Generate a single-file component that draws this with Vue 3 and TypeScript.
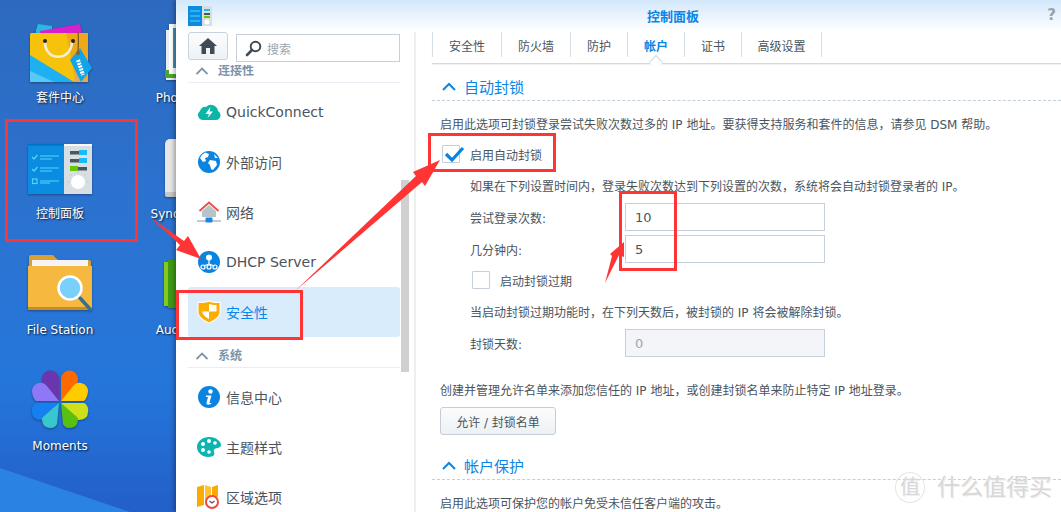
<script setup lang="ts">
const tabs = ['安全性', '防火墙', '防护', '帐户', '证书', '高级设置']
const tabWidths = [69, 69, 57, 57, 57, 81]
const activeTab = '帐户'
</script>

<template>
  <div class="screen">
    <div class="desktop">
      <div class="cell">
        <svg class="app" viewBox="0 0 64 64">
          <path d="M8 8 L10 2 L24 4 L24 14 L8 14Z" fill="#2ab8e0" />
          <path d="M12 9 L52 2 L54 14 L12 14Z" fill="#d81fd0" />
          <rect x="2" y="11" width="58" height="49" rx="1.500" fill="#f6c30a" />
          <path d="M38 11 H60 V60 H48Z" fill="#f0a818" />
          <path d="M2 33 L46 60 H3.500 Q2 60 2 58Z" fill="#1fb0f2" />
          <path d="M2 49 L26 60 H3.500 Q2 60 2 58Z" fill="#58c8f5" />
          <path d="M48 46 L60 60 H46Z" fill="#e0a860" />
          <path d="M17 19 C16 40 44 40 44 19" fill="none" stroke="#f6eed4" stroke-width="2.600" />
          <circle cx="17" cy="19" r="2" fill="#222" />
          <circle cx="45" cy="19" r="2" fill="#222" />
          <path d="M52 26 L64 46 L53 60 L42 38Z" fill="#10a5e8" />
          <path d="M50 38 L55 53" stroke="#fff" stroke-width="4" stroke-dasharray="2 1" />
          <circle cx="50" cy="31" r="2" fill="#8a6a20" />
          <path d="M50 10 C51 18 50 26 50 30" fill="none" stroke="#7a5a20" stroke-width="1.200" />
        </svg>
        <span class="app-name">套件中心</span>
      </div>
      <div class="cell">
        <svg class="app" viewBox="0 0 64 64">
          <rect x="2" y="8" width="50" height="50" fill="#e8edf0" />
          <rect x="1" y="48" width="58" height="8" fill="#4aa52e" />
          <rect x="5" y="2" width="54" height="50" fill="#fff" />
          <rect x="9" y="6" width="46" height="40" fill="#4a90b8" />
        </svg>
        <span class="app-name">Photo Station</span>
      </div>
      <div class="cell">
        <svg class="app" viewBox="0 0 64 64">
          <rect x="0" y="6" width="36" height="50" fill="#0a8ce0" />
          <rect x="0" y="6" width="36" height="1.500" fill="#0070c0" />
          <rect x="36" y="6" width="28" height="50" fill="#d8dfe3" />
          <rect x="36" y="6" width="28" height="2" fill="#f6f8f9" />
          <path d="M4 19 L6 21 L9.500 17 M4 31 L6 33 L9.500 29" fill="none" stroke="#58d2ff" stroke-width="1.200" />
          <rect x="4.500" y="41" width="4.500" height="4.500" fill="none" stroke="#58d2ff" stroke-width="1.200" />
          <path d="M12 18 H31 M12 21 H24 M12 30 H31 M12 33 H24 M12 43 H31 M12 45 H22" stroke="#58d2ff" stroke-width="1" />
          <rect x="42" y="13" width="17" height="3.500" fill="#4a5660" />
          <rect x="51" y="12" width="8" height="5" fill="#18bdf5" />
          <rect x="42" y="21" width="17" height="3.500" fill="#4a5660" />
          <rect x="51" y="20" width="8" height="5" fill="#18bdf5" />
          <rect x="42" y="29" width="17" height="3.500" fill="#4a5660" />
          <rect x="42" y="28" width="8" height="5" fill="#66c800" />
          <circle cx="50" cy="44" r="7" fill="#fff" />
          <path d="M50 35 V33.500 M41 44 H39.500 M60.500 44 H59 M43.500 37.500 L42.500 36.500 M56.500 37.500 L57.500 36.500" stroke="#aeb8be" stroke-width="0.800" />
        </svg>
        <span class="app-name">控制面板</span>
      </div>
      <div class="cell">
        <svg class="app" viewBox="0 0 64 64">
          <rect x="1" y="1" width="62" height="58" rx="5" fill="#e6e6e6" />
          <rect x="1" y="54" width="62" height="5" rx="2" fill="#c8c8c8" />
        </svg>
        <span class="app-name">Synology Drive</span>
      </div>
      <div class="cell">
        <svg class="app" viewBox="0 0 64 64">
          <path d="M1 3 Q1 1 3 1 H25 L30 6 H61 Q63 6 63 8 V20 H1Z" fill="#d9a134" />
          <rect x="4" y="6" width="56" height="8" fill="#f4f4f4" />
          <path d="M0 12 H64 V53 Q64 56 61 56 H3 Q0 56 0 53Z" fill="#f5b93f" />
          <rect x="0" y="53" width="60" height="3" fill="#c98b22" />
          <path d="M52 44 L62 55" stroke="#38708c" stroke-width="3.500" stroke-linecap="round" />
          <circle cx="42" cy="34" r="11.500" fill="#79d0fb" stroke="#fff" stroke-width="2.500" />
        </svg>
        <span class="app-name">File Station</span>
      </div>
      <div class="cell">
        <svg class="app" viewBox="0 0 64 64">
          <rect x="28" y="8" width="36" height="44" fill="#1c6e10" />
          <rect x="0" y="8" width="6" height="44" fill="#84c820" />
          <rect x="4" y="6" width="34" height="48" fill="#3f9a14" />
        </svg>
        <span class="app-name">Audio Station</span>
      </div>
      <div class="cell">
        <svg class="app" viewBox="0 0 64 64">
          <path d="M31 31 L31 9 A8.500 8.500 0 0 0 14 9 Q14 16 19 20Z" fill="#6b35ad" />
          <path d="M31 31 L8 31 Q4 27 4 20 A8.500 8.500 0 0 1 18 15Z" fill="#8f78f8" />
          <path d="M33 31 L33 9 A8.500 8.500 0 0 1 50 9 Q50 16 45 20Z" fill="#ff6a00" />
          <path d="M33 31 L56 31 Q60 27 60 20 A8.500 8.500 0 0 0 46 15Z" fill="#ffcc00" />
          <path d="M31 33 L8 33 A8.500 8.500 0 0 0 4 42 Q4 50 14 50 Q18 50 20 46Z" fill="#1680f0" />
          <path d="M31 33 L14 48 Q14 55 18 57 Q26 60 29 54Z" fill="#38c8cc" />
          <path d="M33 33 L56 33 A8.500 8.500 0 0 1 60 42 Q60 50 50 50 Q46 50 44 46Z" fill="#d0e018" />
          <path d="M33 33 L50 48 Q50 55 46 57 Q38 60 35 54Z" fill="#58c010" />
        </svg>
        <span class="app-name">Moments</span>
      </div>
    </div>

    <div class="window">
      <header class="titlebar">
        <svg class="title-icon" viewBox="0 0 24 22">
          <rect x="0" y="1" width="14" height="20" fill="#0a8ce0" />
          <path d="M2 6 H12 M2 11 H12 M2 16 H12" stroke="#58d2ff" stroke-width="1" />
          <rect x="14" y="1" width="10" height="20" fill="#d8dfe3" />
          <rect x="16" y="4" width="6" height="2" fill="#18bdf5" />
          <rect x="16" y="8" width="6" height="2" fill="#4a5660" />
          <rect x="16" y="11" width="6" height="2" fill="#66c800" />
          <circle cx="19" cy="17" r="2.500" fill="#fff" />
        </svg>
        <span class="title">控制面板</span>
        <span class="help">?</span>
      </header>

      <div class="body">
        <aside class="sidebar">
          <div class="tools">
            <button class="home">
              <svg width="18" height="18" viewBox="0 0 18 18">
                <path d="M9 1 L18 9 H15.500 V17 H11 V11 H7 V17 H2.500 V9 H0Z" fill="#414b55" />
              </svg>
            </button>
            <div class="search">
              <svg width="17" height="17" viewBox="0 0 17 17">
                <circle cx="10.500" cy="6.500" r="4.800" fill="none" stroke="#414b55" stroke-width="2" />
                <path d="M7 10 L2 15" stroke="#414b55" stroke-width="2.600" stroke-linecap="round" />
              </svg>
              <span>搜索</span>
            </div>
          </div>

          <div class="nav-view">
            <div class="nav-list">
              <div class="nav-group">
                <svg class="group-arrow" width="12" height="8" viewBox="0 0 12 8"><path d="M0.500 7 L6 1.500 L11.500 7" fill="none" stroke="#7c93a8" stroke-width="1.800" /></svg>
                连接性
              </div>
              <div class="nav-item">
                <svg class="nav-icon" viewBox="0 0 24 24">
                  <path d="M6 20 A5 5 0 0 1 3 11 A5 5 0 0 1 9 7 A7 7 0 0 1 21 11 A4.800 4.800 0 0 1 19 20Z" fill="#0db5a8" />
                  <path d="M13.500 7 L8.500 14 H12 L10.500 18 L16 11.500 H12.500Z" fill="#fff" />
                </svg>
                QuickConnect
              </div>
              <div class="nav-item">
                <svg class="nav-icon" viewBox="0 0 24 24">
                  <circle cx="12" cy="12" r="11" fill="#0a84e0" />
                  <path d="M8 2.500 L12 4 L11 7 L8 8 L9 11 L6 12 L3 8 Q5 4 8 2.500Z M13 10 L19 11 L20 15 L16 20 L14 19 L13 15 L11 13Z M17 4 L21 8 L18 8Z" fill="#fff" />
                </svg>
                外部访问
              </div>
              <div class="nav-item">
                <svg class="nav-icon" viewBox="0 0 24 24">
                  <path d="M5 11 V17 H19 V11 L12 5Z" fill="#b8c4cc" />
                  <path d="M2.500 11 L12 2.500 L21.500 11" fill="none" stroke="#ee4b45" stroke-width="1.800" />
                  <path d="M0 21 H24" stroke="#9aa8b2" stroke-width="1.200" />
                  <rect x="8.500" y="17.500" width="7" height="5" rx="1" fill="#1c86e8" />
                </svg>
                网络
              </div>
              <div class="nav-item">
                <svg class="nav-icon" viewBox="0 0 24 24">
                  <circle cx="12" cy="12" r="11" fill="#0a84e0" />
                  <circle cx="12" cy="7.500" r="3" fill="#fff" />
                  <path d="M12 10 V14 M12 14 L6.500 16 M12 14 L17.500 16" stroke="#fff" stroke-width="1.200" />
                  <g fill="none" stroke="#fff" stroke-width="1.200">
                    <circle cx="6" cy="17" r="2" />
                    <circle cx="12" cy="17" r="2" />
                    <circle cx="18" cy="17" r="2" />
                  </g>
                </svg>
                DHCP Server
              </div>
              <div class="nav-item active">
                <svg class="nav-icon" viewBox="0 0 24 24">
                  <path d="M12 0.500 Q18 2.500 23.500 1.500 V13 Q22 19 12 23.500 Q2 19 0.500 13 V1.500 Q6 2.500 12 0.500Z" fill="#fff" />
                  <path d="M12 1.800 Q18 3.500 22.500 2.800 V13 Q21 18.500 12 22.500 Q3 18.500 1.500 13 V2.800 Q6 3.500 12 1.800Z" fill="#fbad00" />
                  <path d="M12 4 Q16 5.300 19.500 5 V11.500 H12Z M12 11.500 V19 Q6.500 16.500 5 11.500Z" fill="#fff" />
                </svg>
                安全性
              </div>
              <div class="nav-group">
                <svg class="group-arrow" width="12" height="8" viewBox="0 0 12 8"><path d="M0.500 7 L6 1.500 L11.500 7" fill="none" stroke="#7c93a8" stroke-width="1.800" /></svg>
                系统
              </div>
              <div class="nav-item">
                <svg class="nav-icon" viewBox="0 0 24 24">
                  <circle cx="12" cy="12" r="11" fill="#0a84e0" />
                  <circle cx="13.500" cy="6.500" r="2.200" fill="#fff" />
                  <path d="M9 10.500 H14.500 L12.500 17.500 Q12.300 18.500 14.500 17.500 L14 19 Q9 21 9.500 17.500 L11 12 H9Z" fill="#fff" />
                </svg>
                信息中心
              </div>
              <div class="nav-item">
                <svg class="nav-icon" viewBox="0 0 24 24">
                  <path d="M12 2 C20 2 24 7 24 10 C24 14 18 12 17 15 C16 17 19 19 16 21 C8 24 0 19 0 12 C0 6 6 2 12 2Z" fill="#0db5b0" />
                  <g fill="#fff">
                    <circle cx="6" cy="9" r="2" />
                    <circle cx="12" cy="6" r="2" />
                    <circle cx="18" cy="8" r="1.800" />
                    <circle cx="6" cy="15" r="2" />
                    <circle cx="12" cy="17" r="1.800" />
                  </g>
                </svg>
                主题样式
              </div>
              <div class="nav-item">
                <svg class="nav-icon" viewBox="0 0 24 24">
                  <path d="M0 2 L7 0 L7 20 L0 22Z M15 2 L21 0 L21 12 L15 12Z" fill="#f9ab00" />
                  <path d="M8 0 L14 2 L14 14 L8 20Z" fill="#ffc233" />
                  <circle cx="15" cy="17" r="6" fill="#fff" stroke="#ee4b45" stroke-width="2" />
                  <path d="M12.500 16 L15 18 L17.500 16" fill="none" stroke="#555" stroke-width="1.200" />
                </svg>
                区域选项
              </div>
            </div>
          </div>
          <div class="scroll-thumb" />
        </aside>

        <main class="main">
          <nav class="tabs">
            <div
              v-for="(tab, i) in tabs"
              :key="tab"
              class="tab"
              :class="{ current: tab === activeTab }"
              :style="{ width: tabWidths[i] + 'px' }"
            >
              {{ tab }}
            </div>
          </nav>

          <div class="section-head">
            <svg width="14" height="9" viewBox="0 0 14 9"><path d="M1 8 L7 2 L13 8" fill="none" stroke="#0a86e6" stroke-width="2" /></svg>
            自动封锁
          </div>
          <p class="desc top">启用此选项可封锁登录尝试失败次数过多的 IP 地址。要获得支持服务和套件的信息，请参见 DSM 帮助。</p>
          <label class="check first">
            <span class="box">
              <svg class="tick" width="22" height="18" viewBox="0 0 22 18"><path d="M3 9 L9 15 L20 3" fill="none" stroke="#0a84e0" stroke-width="3.200" /></svg>
            </span>
            启用自动封锁
          </label>
          <p class="desc sub para">如果在下列设置时间内，登录失败次数达到下列设置的次数，系统将会自动封锁登录者的 IP。</p>
          <div class="field f1">
            <span class="field-label">尝试登录次数:</span>
            <div class="input">10</div>
          </div>
          <div class="field f2">
            <span class="field-label">几分钟内:</span>
            <div class="input">5</div>
          </div>
          <label class="check second">
            <span class="box" />
            启动封锁过期
          </label>
          <p class="desc sub para">当启动封锁过期功能时，在下列天数后，被封锁的 IP 将会被解除封锁。</p>
          <div class="field f1">
            <span class="field-label">封锁天数:</span>
            <div class="input disabled">0</div>
          </div>
          <p class="desc list-desc">创建并管理允许名单来添加您信任的 IP 地址，或创建封锁名单来防止特定 IP 地址登录。</p>
          <button class="list-btn">允许 / 封锁名单</button>

          <div class="section-head second-head">
            <svg width="14" height="9" viewBox="0 0 14 9"><path d="M1 8 L7 2 L13 8" fill="none" stroke="#0a86e6" stroke-width="2" /></svg>
            帐户保护
          </div>
          <p class="desc top">启用此选项可保护您的帐户免受未信任客户端的攻击。</p>
        </main>
      </div>
    </div>

    <div class="watermark">
      <span class="wm-seal">值</span>
      <span class="wm-text">什么值得买</span>
    </div>

    <svg class="marks" width="1061" height="512" viewBox="0 0 1061 512">
      <g fill="none" stroke="#ff3535" stroke-width="3">
        <rect x="6.500" y="120.500" width="130" height="120" />
        <rect x="177.500" y="291.500" width="124" height="47" />
        <rect x="429.500" y="134.500" width="125" height="36" />
        <rect x="620.500" y="192.500" width="55" height="77" />
      </g>
      <g fill="#ff3535">
        <polygon points="150,217 184,241 188,236 201,259 176,250 180,245" />
        <polygon points="295,291 416,176 413,172 440,160 425,186 422,182" />
        <polygon points="605,283 612,256 610,254 624,242 624,257 619,255" />
      </g>
    </svg>
  </div>
</template>

<style>
html,
body {
  margin: 0;
  background: #fff;
}
</style>

<style scoped>
.screen {
  position: relative;
  display: flex;
  width: 1061px;
  height: 512px;
  overflow: hidden;
  font-family: "DejaVu Sans", "Noto Sans CJK SC", sans-serif;
  color: #4a545e;
}

.desktop {
  position: relative;
  flex: 0 0 176px;
  display: grid;
  grid-template-columns: 120px 120px;
  grid-auto-rows: 116px;
  column-gap: 16px;
  padding-top: 22px;
  overflow: hidden;
  box-sizing: border-box;
  background: linear-gradient(180deg, #2d6abf 0%, #2b74d3 50%, #2476db 75%, #235fc8 100%);
}

.desktop::before {
  content: "";
  position: absolute;
  inset: 0;
  background: #2a82e2;
  clip-path: polygon(0 468px, 130px 512px, 0 512px);
}

.cell {
  position: relative;
  display: flex;
  flex-direction: column;
  align-items: center;
}

.app {
  width: 64px;
  height: 64px;
  flex: none;
  filter: drop-shadow(0 1px 1px rgba(0, 0, 0, 0.35));
}

.app-name {
  margin-top: 3px;
  line-height: 18px;
  font-size: 12px;
  color: #fff;
  white-space: nowrap;
  text-shadow: 1px 1px 2px rgba(0, 0, 0, 0.85);
}

.window {
  flex: 1;
  min-width: 0;
  display: flex;
  flex-direction: column;
  background: #fff;
  box-shadow: -2px 0 4px rgba(0, 0, 0, 0.3);
  z-index: 1;
}

.titlebar {
  position: relative;
  flex: 0 0 32px;
  display: flex;
  align-items: center;
  padding-left: 12px;
  background: linear-gradient(180deg, #d3e8fa 0%, #fff 100%);
}

.title-icon {
  width: 24px;
  height: 22px;
}

.title {
  position: absolute;
  left: 471px;
  top: 8px;
  font-size: 13px;
  line-height: 17px;
  font-weight: 700;
  color: #0a86e6;
}

.help {
  position: absolute;
  right: 5px;
  top: 7px;
  font-size: 15px;
  line-height: 16px;
  font-weight: 700;
  color: #9aa2aa;
}

.body {
  flex: 1;
  display: flex;
  min-height: 0;
}

.sidebar {
  position: relative;
  flex: 0 0 238px;
  display: flex;
  flex-direction: column;
  border-right: 2px solid #eceef0;
}

.tools {
  flex: 0 0 33px;
  display: flex;
  padding-left: 12px;
  gap: 8px;
}

.home {
  width: 40px;
  height: 28px;
  padding: 0;
  display: flex;
  align-items: center;
  justify-content: center;
  border: 1px solid #c9d3dd;
  border-radius: 3px;
  background: linear-gradient(180deg, #fbfcfd, #eef2f5);
}

.search {
  width: 164px;
  height: 28px;
  margin-top: 2px;
  box-sizing: border-box;
  display: flex;
  align-items: center;
  gap: 5px;
  padding-left: 8px;
  border: 1px solid #c5d0dc;
  font-size: 12px;
  color: #9aa6b2;
}

.nav-view {
  flex: 1;
  min-height: 0;
  overflow: hidden;
}

.nav-list {
  margin: -13px 0 0 12px;
  width: 212px;
}

.nav-group {
  display: flex;
  align-items: flex-end;
  gap: 10px;
  padding: 0 0 2px 8px;
  box-sizing: border-box;
  height: 31px;
  margin-bottom: 4px;
  border-bottom: 1px solid #e8eef4;
  font-size: 12px;
  line-height: 17px;
  font-weight: 700;
  color: #7c93a8;
}

.group-arrow {
  margin-bottom: 5px;
}

.nav-item {
  height: 50px;
  display: flex;
  align-items: center;
  gap: 5px;
  padding-left: 9px;
  box-sizing: border-box;
  font-size: 14px;
  color: #4a545e;
  border-radius: 3px;
  white-space: nowrap;
}

.nav-item.active {
  background: #d9ecfc;
  color: #0a86e6;
}

.nav-icon {
  width: 24px;
  height: 24px;
  flex: none;
}

.scroll-thumb {
  position: absolute;
  left: 225px;
  top: 148px;
  width: 8px;
  height: 192px;
  background: #d0d0d0;
}

.main {
  flex: 1;
  min-width: 0;
  padding-left: 16px;
  overflow: hidden;
}

.tabs {
  height: 31px;
  display: flex;
  border-bottom: 1px solid #d5d8dc;
  box-shadow: 0 1px 1px rgba(0, 0, 0, 0.05);
}

.tab {
  position: relative;
  height: 25px;
  padding-top: 2px;
  box-sizing: border-box;
  display: flex;
  align-items: center;
  justify-content: center;
  border-left: 1px solid #d5dde5;
  font-size: 12px;
  color: #4a545e;
}

.tab:last-child {
  border-right: 1px solid #d5dde5;
}

.tab.current {
  color: #0a86e6;
  font-weight: 700;
}

.tab.current::after {
  content: "";
  position: absolute;
  left: 23px;
  top: 24.500px;
  width: 9px;
  height: 9px;
  background: #fff;
  border-left: 1px solid #d5d8dc;
  border-top: 1px solid #d5d8dc;
  transform: rotate(45deg);
}

.section-head {
  height: 37px;
  box-sizing: border-box;
  display: flex;
  align-items: center;
  gap: 8px;
  padding: 8px 0 0 10px;
  border-bottom: 1px dashed #c2cfdc;
  font-size: 15px;
  color: #0a86e6;
}

.second-head {
  margin-top: 8px;
}

.desc {
  margin: 0 0 0 8px;
  font-size: 12px;
  line-height: 20px;
  color: #4a545e;
  white-space: nowrap;
}

.desc.top {
  margin-top: 14px;
}

.desc.sub {
  margin-left: 38px;
}

.desc.para {
  margin-top: 14px;
}

.desc.list-desc {
  margin-top: 24px;
}

.check {
  display: flex;
  align-items: flex-start;
  height: 18px;
  font-size: 12px;
  line-height: 22px;
}

.check.first {
  margin: 10px 0 0 10px;
  gap: 10px;
}

.check.second {
  margin: 8px 0 0 40px;
  gap: 10px;
}

.box {
  position: relative;
  width: 18px;
  height: 18px;
  box-sizing: border-box;
  border: 1px solid #c5d0dc;
  border-radius: 1px;
  background: #fff;
}

.tick {
  position: absolute;
  left: 0;
  top: -1px;
}

.field {
  display: flex;
  align-items: center;
  margin-left: 38px;
  font-size: 12px;
}

.field.f1 {
  margin-top: 6px;
}

.field.f2 {
  margin-top: 4px;
}

.field-label {
  width: 155px;
}

.input {
  width: 200px;
  height: 28px;
  box-sizing: border-box;
  border: 1px solid #c5d0dc;
  padding-left: 9px;
  font-size: 13px;
  line-height: 27px;
  background: #fff;
}

.input.disabled {
  background: #f3f5f8;
  color: #9aa6b2;
}

.list-btn {
  display: block;
  margin: 6px 0 0 8px;
  width: 116px;
  height: 28px;
  padding: 0;
  border: 1px solid #c5ced8;
  border-radius: 3px;
  background: linear-gradient(180deg, #fbfcfd, #eef1f4);
  font: inherit;
  font-size: 12px;
  color: #4a545e;
}

.watermark {
  position: absolute;
  left: 895px;
  top: 472px;
  display: flex;
  align-items: center;
  gap: 12px;
  z-index: 2;
  color: #d8d8d8;
  text-shadow: 1px 1px 0 #f0f0f0;
  white-space: nowrap;
}

.wm-seal {
  width: 28px;
  height: 29px;
  border-radius: 50%;
  border: 1px solid #e6e6e6;
  font-size: 20px;
  line-height: 29px;
  text-align: center;
}

.wm-text {
  font-size: 23px;
  line-height: 29px;
}

.marks {
  position: absolute;
  left: 0;
  top: 0;
  z-index: 3;
  pointer-events: none;
}
</style>
